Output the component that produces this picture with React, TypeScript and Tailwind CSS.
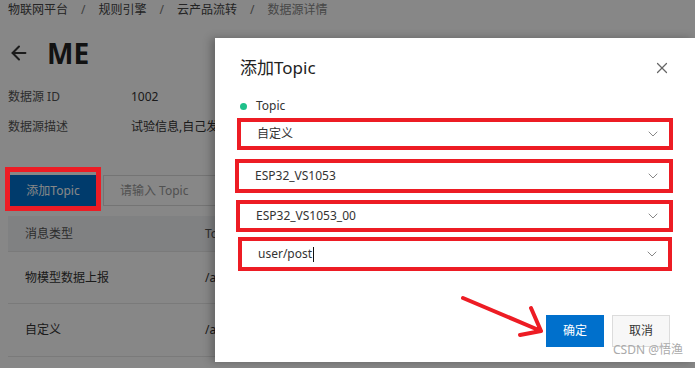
import { ArrowLeft, ChevronDown, X } from 'lucide-react';

const selects = [
  { value: '自定义', cls: 'mt-[5px] ml-[22px] w-[436px] h-[32px]' },
  { value: 'ESP32_VS1053', cls: 'mt-[9px] ml-[20px] w-[438px] h-[34px]' },
  { value: 'ESP32_VS1053_00', cls: 'mt-[7px] ml-[21px] w-[437px] h-[32px]' },
  { value: 'user/post', cls: 'mt-[5px] ml-[23px] w-[434px] h-[34px]', caret: true },
];

export default function App() {
  return (
    <div className="relative w-[695px] h-[368px] overflow-hidden bg-white font-['Noto_Sans','Noto_Sans_CJK_SC',sans-serif] text-[#333]">
      {/* page behind the dialog */}
      <div className="pl-2">
        <div className="h-5 flex items-center gap-[13px] text-[12px] text-[#444] whitespace-nowrap">
          <span>物联网平台</span>
          <span className="text-[#777]">/</span>
          <span>规则引擎</span>
          <span className="text-[#777]">/</span>
          <span>云产品流转</span>
          <span className="text-[#777]">/</span>
          <span className="text-[#888]">数据源详情</span>
        </div>

        <div className="mt-[13px] h-10 flex items-center gap-[17px]">
          <ArrowLeft className="w-[22px] h-[22px] text-[#333]" strokeWidth={2.2} />
          <span className="text-[28px] font-bold text-[#222] leading-none">ME</span>
        </div>

        <div className="mt-[9px] w-[207px] overflow-hidden text-[12px] text-[#555] whitespace-nowrap">
          <div className="h-[30px] flex items-center">
            <span className="w-[123px] shrink-0">数据源 ID</span>
            <span className="text-[#333]">1002</span>
          </div>
          <div className="h-[30px] flex items-center">
            <span className="w-[123px] shrink-0">数据源描述</span>
            <span className="text-[#333]">试验信息,自己发</span>
          </div>
        </div>

        <div className="mt-[33px] w-[207px] overflow-hidden flex items-center gap-[7px] pl-[2px]">
          <button className="w-[86px] h-[31px] shrink-0 bg-[#0070cc] text-white text-[12px]">添加Topic</button>
          <div className="w-[200px] h-[31px] shrink-0 border border-[#dcdcdc] flex items-center pl-[16px] text-[12px] text-[#999]">
            请输入 Topic
          </div>
        </div>

        <div className="mt-[10px] w-[207px] overflow-hidden text-[12px] whitespace-nowrap">
          <div className="w-[400px] h-9 bg-[#f2f3f5] flex items-center border-b border-[#e6e6e6] text-[#555]">
            <span className="w-[197px] shrink-0 pl-[17px]">消息类型</span>
            <span>Topic</span>
          </div>
          <div className="w-[400px] h-[52px] flex items-center border-b border-[#e6e6e6]">
            <span className="w-[197px] shrink-0 pl-[17px]">物模型数据上报</span>
            <span>/a1b2c3/ESP32_VS1053/thing/event</span>
          </div>
          <div className="w-[400px] h-[53px] flex items-center border-b border-[#e6e6e6]">
            <span className="w-[197px] shrink-0 pl-[17px]">自定义</span>
            <span>/a1b2c3/ESP32_VS1053/user</span>
          </div>
        </div>
      </div>

      {/* mask */}
      <div className="absolute inset-0 bg-black/[0.47]" />

      {/* annotation round the button */}
      <div className="absolute left-[5px] top-[167px] w-[96px] h-[44px] border-[5px] border-[#ed1c24]" />

      {/* dialog */}
      <div className="absolute left-[215px] top-[38px] w-[480px] h-[324px] bg-white shadow-[-4px_0_8px_rgba(0,0,0,0.25)] flex flex-col">
        <div className="mt-5 h-5 flex items-center justify-between pl-[25px] pr-[24px]">
          <span className="text-[17px] text-[#222]">添加Topic</span>
          <X className="w-[18px] h-[18px] text-[#666]" strokeWidth={1.6} />
        </div>

        <div className="mt-[21px] h-[14px] pl-[25px] flex items-center gap-[9px] text-[12px] text-[#333]">
          <span className="w-[7px] h-[7px] rounded-full bg-[#1ec08a]" />
          <span>Topic</span>
        </div>

        {selects.map((s) => (
          <div
            key={s.value}
            className={`${s.cls} border-4 border-[#ed1c24] bg-white flex items-center justify-between pl-[16px] pr-[8px] text-[12px] text-[#333]`}
          >
            <span className="flex items-center">
              {s.value}
              {s.caret && <span className="ml-px w-px h-[15px] bg-[#111]" />}
            </span>
            <ChevronDown className="w-[16px] h-[16px] text-[#888]" strokeWidth={1.5} />
          </div>
        ))}

        <div className="mt-[44px] pr-[25px] flex justify-end gap-2 text-[12px]">
          <button className="w-[58px] h-[32px] bg-[#0070cc] text-white">确定</button>
          <button className="w-[58px] h-[32px] bg-[#f7f7f7] border border-[#dcdcdc] text-[#333]">取消</button>
        </div>
      </div>

      {/* hand-drawn arrow */}
      <svg className="absolute left-0 top-0 w-[695px] h-[368px] pointer-events-none" viewBox="0 0 695 368">
        <path
          d="M463 298 L541 331 M531 308 L541 331 L520 335"
          stroke="#ed1c24"
          strokeWidth="4"
          fill="none"
          strokeLinecap="round"
          strokeLinejoin="round"
        />
      </svg>

      <span className="absolute left-[613px] top-[344px] text-[12px] text-[#aaa] leading-none">CSDN @悟渔</span>
    </div>
  );
}
